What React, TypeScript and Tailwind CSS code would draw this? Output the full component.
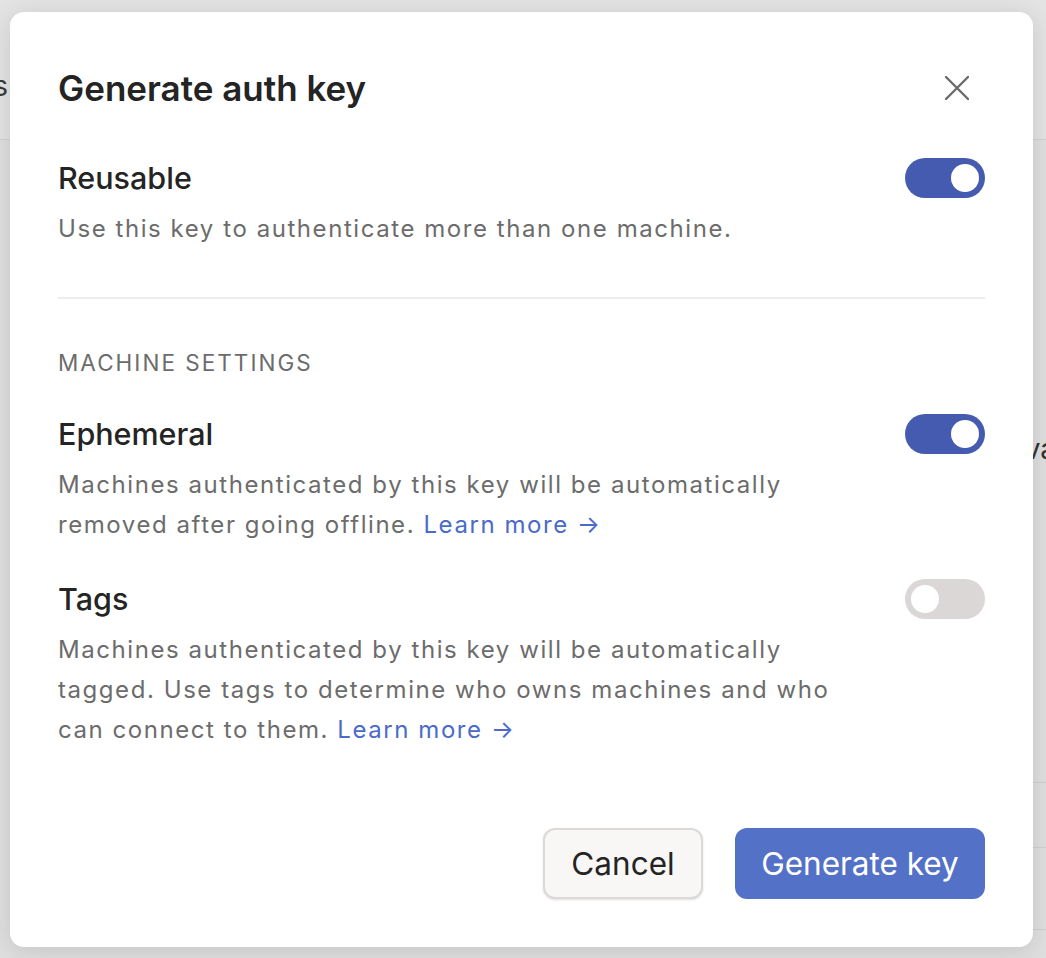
import React from "react";

function Toggle({ on }: { on: boolean }) {
  return (
    <div
      className={`flex h-[40px] w-[80px] shrink-0 items-center rounded-full px-[6px] ${
        on ? "justify-end bg-[#455bb0]" : "justify-start bg-[#dbd7d6]"
      }`}
    >
      <div className="h-[28px] w-[28px] rounded-full bg-white" />
    </div>
  );
}

function Setting({ title, on, children }: { title: string; on: boolean; children: React.ReactNode }) {
  return (
    <div>
      <div className="flex items-center justify-between">
        <h3 className="text-[30.5px] font-medium leading-[40px] text-[#242424]">{title}</h3>
        <Toggle on={on} />
      </div>
      <p className="mt-[11px] max-w-[800px] text-[24px] leading-[40px] tracking-[0.065em] text-[#6c6c6c]">
        {children}
      </p>
    </div>
  );
}

function LearnMore() {
  return <a className="text-[#4a6bc9]">Learn more →</a>;
}

export default function App() {
  return (
    <div className="relative h-[958px] w-full overflow-hidden bg-[#dfdfdf] font-['Inter',sans-serif]">
      {/* page behind the dialog */}
      <div className="flex h-[140px] items-center border-b border-[#d2d2d2] bg-[#e3e3e3] pt-[32px]">
        <span className="ml-[-56px] text-[28px] text-[#3a3a3a]">Keys</span>
      </div>
      <div className="flex h-[330px] items-end justify-end">
        <span className="mr-[-10px] text-[28px] text-[#333]">Java</span>
      </div>
      <div className="ml-[900px] mt-[312px] border-b border-[#cfcfcf]" />
      <div className="ml-[900px] mt-[64px] border-b border-[#cfcfcf]" />
      <div className="ml-[900px] mt-[81px] border-b border-[#cfcfcf]" />

      {/* dialog */}
      <div className="absolute left-[10px] top-[12px] flex h-[935px] w-[1023px] flex-col rounded-[14px] bg-white px-[48px] pt-[52px] shadow-[0_4px_24px_rgba(0,0,0,0.12)]">
        <div className="flex items-center justify-between">
          <h2 className="text-[35px] font-semibold leading-[48px] text-[#242424]">Generate auth key</h2>
          <svg width="24" height="24" viewBox="0 0 24 24" className="mr-[16px] text-[#6b6b6b]">
            <path d="M1 1L23 23M23 1L1 23" stroke="currentColor" strokeWidth="2.4" strokeLinecap="round" />
          </svg>
        </div>

        <div className="mt-[46px]">
          <Setting title="Reusable" on>
            Use this key to authenticate more than one machine.
          </Setting>
        </div>

        <div className="mt-[48px] border-t-2 border-[#ececec]" />

        <div className="mt-[50px] text-[22.5px] leading-[28px] uppercase tracking-[0.09em] text-[#6c6c6c]">
          Machine settings
        </div>

        <div className="mt-[37px]">
          <Setting title="Ephemeral" on>
            Machines authenticated by this key will be automatically removed after going offline. <LearnMore />
          </Setting>
        </div>

        <div className="mt-[34px]">
          <Setting title="Tags" on={false}>
            Machines authenticated by this key will be automatically tagged. Use tags to determine who owns machines
            and who can connect to them. <LearnMore />
          </Setting>
        </div>

        <div className="mt-auto mb-[48px] flex justify-end gap-[32px]">
          <button className="h-[71px] w-[160px] rounded-[12px] border-2 border-[#dcd9d7] bg-[#f8f7f6] text-[31.5px] text-[#242424] shadow-sm">
            Cancel
          </button>
          <button className="h-[71px] w-[250px] rounded-[12px] bg-[#5471c8] text-[31.5px] text-white">
            Generate key
          </button>
        </div>
      </div>
    </div>
  );
}
